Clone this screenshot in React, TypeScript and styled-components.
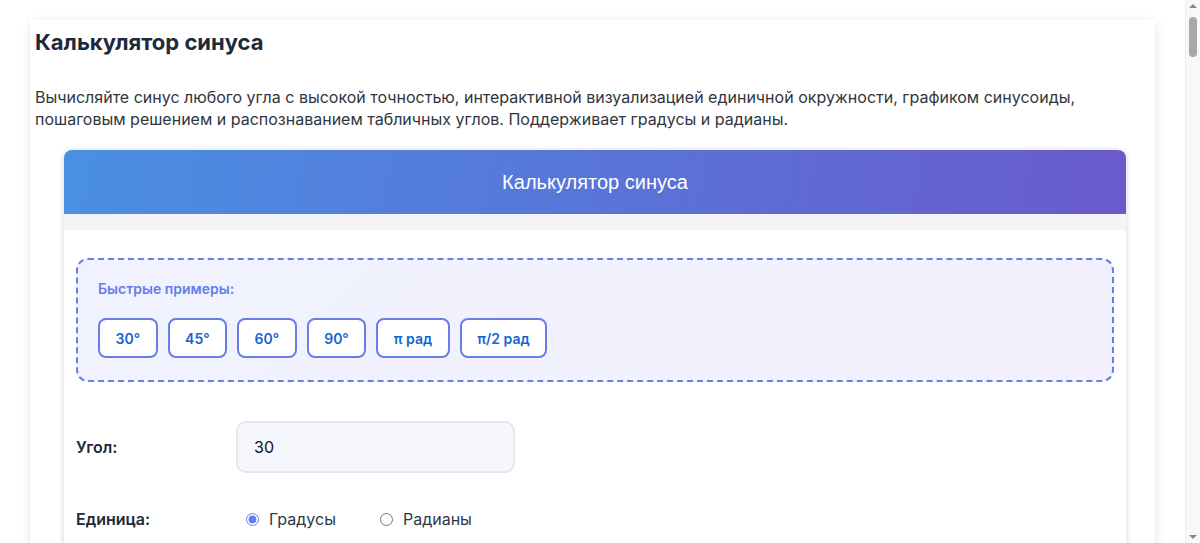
import React, { useState } from 'react';
import styled, { createGlobalStyle } from 'styled-components';

const GlobalStyle = createGlobalStyle`
  html, body {
    margin: 0;
    padding: 0;
    background: #ffffff;
    font-family: Inter, "Noto Sans", sans-serif;
  }
  * { box-sizing: border-box; }
`;

const Page = styled.div`
  padding: 20px 15px 40px 0;
`;

const ScrollTrack = styled.div`
  position: fixed;
  top: 0;
  right: 0;
  width: 15px;
  height: 100vh;
  background: #f8f8f8;
  border-left: 1px solid #ececec;
`;

const ScrollThumb = styled.div`
  position: absolute;
  top: 17px;
  left: 3px;
  width: 8px;
  height: 40px;
  border-radius: 4px;
  background: #a8a8a8;
`;

const ScrollArrow = styled.div<{ $down?: boolean }>`
  position: absolute;
  left: 3px;
  ${(p) => (p.$down ? 'bottom: 4px;' : 'top: 4px;')}
  width: 0;
  height: 0;
  border-left: 4px solid transparent;
  border-right: 4px solid transparent;
  ${(p) => (p.$down ? 'border-top: 4px solid #8a8a8a;' : 'border-bottom: 4px solid #8a8a8a;')}
`;

const Card = styled.article`
  width: 1125px;
  margin: 0 auto;
  background: #fff;
  box-shadow: 0 2px 10px rgba(0, 0, 0, 0.1);
  padding: 7px 5px 40px;
`;

const Title = styled.h1`
  margin: 0;
  font-size: 22px;
  line-height: 30px;
  font-weight: 700;
  color: #1e293b;
`;

const Intro = styled.p`
  margin: 29px 0 20px;
  font-size: 16px;
  line-height: 22px;
  color: #2f3640;
`;

const Calc = styled.section`
  width: 1062px;
  margin-left: 29px;
  border-radius: 8px;
  overflow: hidden;
  background: #fff;
  box-shadow: 0 1px 6px rgba(0, 0, 0, 0.18);
`;

const CalcHeader = styled.header`
  height: 64px;
  display: flex;
  align-items: center;
  justify-content: center;
  background: linear-gradient(100deg, #4a90e2 0%, #5a72d8 55%, #6a5acd 100%);
  color: #fff;
  font-family: "Liberation Sans", Arial, sans-serif;
  font-size: 20px;
`;

const Band = styled.div`
  height: 16px;
  background: #f5f5f5;
`;

const Body = styled.div`
  padding: 28px 12px 30px;
`;

const Examples = styled.div`
  border: 2px dashed #667eea;
  border-radius: 12px;
  background: linear-gradient(135deg, #f0f3ff 0%, #f3effd 100%);
  padding: 20px 20px 22px;
`;

const ExamplesLabel = styled.div`
  font-size: 14px;
  line-height: 18px;
  font-weight: 600;
  color: #667eea;
  margin-bottom: 20px;
`;

const ChipRow = styled.div`
  display: flex;
  gap: 10px;
`;

const Chip = styled.button`
  height: 40px;
  padding: 0 15.5px;
  border: 2px solid #667eea;
  border-radius: 8px;
  background: #fff;
  color: #1565d0;
  font-family: Inter, sans-serif;
  font-size: 14px;
  font-weight: 600;
  cursor: pointer;
`;

const Row = styled.div<{ $top: number }>`
  display: flex;
  align-items: center;
  margin-top: ${(p) => p.$top}px;
`;

const Label = styled.label`
  width: 160px;
  font-size: 16px;
  font-weight: 600;
  color: #1f2937;
`;

const Input = styled.input`
  width: 279px;
  height: 52px;
  padding: 0 16px;
  border: 2px solid #e3e8f0;
  border-radius: 10px;
  background: #f5f7fc;
  font-family: Inter, sans-serif;
  font-size: 16px;
  color: #111;
  outline: none;
`;

const Radios = styled.div`
  display: flex;
  gap: 44px;
  padding-left: 10px;
`;

const RadioLabel = styled.label`
  display: flex;
  align-items: center;
  gap: 10px;
  font-size: 16px;
  color: #2d3748;
  line-height: 34px;

  input {
    margin: 0;
    width: 13px;
    height: 13px;
    accent-color: #667eea;
  }
`;

const CalcButton = styled.button`
  margin-top: 30px;
  width: 100%;
  height: 52px;
  border: none;
  border-radius: 10px;
  background: linear-gradient(135deg, #4a90e2, #6a5acd);
  color: #fff;
  font-family: Inter, sans-serif;
  font-size: 16px;
  font-weight: 600;
`;

const examples = ['30°', '45°', '60°', '90°', 'π рад', 'π/2 рад'];

export default function App() {
  const [unit, setUnit] = useState('deg');
  const [angle, setAngle] = useState('30');
  return (
    <Page>
      <GlobalStyle />
      <Card>
        <Title>Калькулятор синуса</Title>
        <Intro>
          Вычисляйте синус любого угла с высокой точностью, интерактивной визуализацией единичной окружности, графиком синусоиды,
          пошаговым решением и распознаванием табличных углов. Поддерживает градусы и радианы.
        </Intro>
        <Calc>
          <CalcHeader>Калькулятор синуса</CalcHeader>
          <Band />
          <Body>
            <Examples>
              <ExamplesLabel>Быстрые примеры:</ExamplesLabel>
              <ChipRow>
                {examples.map((e) => (
                  <Chip key={e}>{e}</Chip>
                ))}
              </ChipRow>
            </Examples>
            <Row $top={39}>
              <Label>Угол:</Label>
              <Input value={angle} onChange={(e) => setAngle(e.target.value)} />
            </Row>
            <Row $top={29}>
              <Label>Единица:</Label>
              <Radios>
                <RadioLabel>
                  <input type="radio" name="unit" checked={unit === 'deg'} onChange={() => setUnit('deg')} />
                  Градусы
                </RadioLabel>
                <RadioLabel>
                  <input type="radio" name="unit" checked={unit === 'rad'} onChange={() => setUnit('rad')} />
                  Радианы
                </RadioLabel>
              </Radios>
            </Row>
            <CalcButton>Вычислить</CalcButton>
          </Body>
        </Calc>
      </Card>
      <ScrollTrack>
        <ScrollArrow />
        <ScrollThumb />
        <ScrollArrow $down />
      </ScrollTrack>
    </Page>
  );
}
